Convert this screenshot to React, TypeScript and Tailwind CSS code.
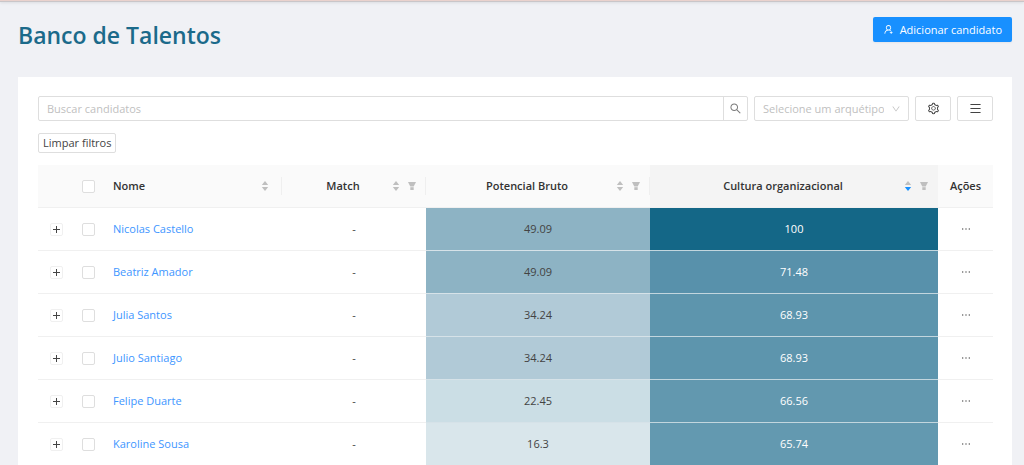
import React, { useState } from 'react';
import {
    AiOutlineDown,
    AiOutlineEllipsis,
    AiOutlineMenu,
    AiOutlineSearch,
    AiOutlineSetting,
    AiOutlineUserAdd,
} from 'react-icons/ai';

interface Score {
    value: string;
    color: string;
}

interface Candidate {
    name: string;
    match: string;
    potential: Score;
    culture: Score;
}

const candidates: Candidate[] = [
    { name: 'Nicolas Castello', match: '-', potential: { value: '49.09', color: 'bg-[#8db3c4]' }, culture: { value: '100', color: 'bg-[#146787]' } },
    { name: 'Beatriz Amador', match: '-', potential: { value: '49.09', color: 'bg-[#8db3c4]' }, culture: { value: '71.48', color: 'bg-[#5891ab]' } },
    { name: 'Julia Santos', match: '-', potential: { value: '34.24', color: 'bg-[#b1cad7]' }, culture: { value: '68.93', color: 'bg-[#5d95ad]' } },
    { name: 'Julio Santiago', match: '-', potential: { value: '34.24', color: 'bg-[#b1cad7]' }, culture: { value: '68.93', color: 'bg-[#5d95ad]' } },
    { name: 'Felipe Duarte', match: '-', potential: { value: '22.45', color: 'bg-[#cbdee5]' }, culture: { value: '66.56', color: 'bg-[#6298af]' } },
    { name: 'Karoline Sousa', match: '-', potential: { value: '16.3', color: 'bg-[#d9e6eb]' }, culture: { value: '65.74', color: 'bg-[#6399b0]' } },
];

const SortButton: React.FC<{ label: string; descending?: boolean }> = ({ label, descending }) => (
    <button type="button" aria-label={`Ordenar por ${label}`} className="shrink-0">
        <svg className="w-2 h-3" viewBox="0 0 8 12">
            <path d="M4 1 7.2 5H.8z" fill="#bfbfbf" />
            <path d="M4 11 7.2 7H.8z" fill={descending ? '#1890ff' : '#bfbfbf'} />
        </svg>
    </button>
);

const FilterButton: React.FC<{ label: string }> = ({ label }) => (
    <button type="button" aria-label={`Filtrar ${label}`} className="shrink-0">
        <svg className="w-2 h-3" viewBox="0 0 8 12" fill="#bfbfbf">
            <path d="M0 2h8L5.7 6.6H2.3z" />
            <path d="M2.3 7.2h3.4V10H2.3z" />
        </svg>
    </button>
);

interface ScoreHeaderProps {
    label: string;
    active?: boolean;
}

const ScoreHeader: React.FC<ScoreHeaderProps> = ({ label, active }) => (
    <th scope="col" className={`border-b border-[#f0f0f0] font-semibold ${active ? 'bg-[#f4f4f4]' : ''}`}>
        <div className={`flex items-center h-[18px] pl-5 pr-[9px] gap-2 border-r ${active ? 'border-transparent' : 'border-[#efefef]'}`}>
            <span className="flex-1 text-center">{label}</span>
            <SortButton label={label} descending={active} />
            <FilterButton label={label} />
        </div>
    </th>
);

const Checkbox: React.FC<{ label: string }> = ({ label }) => (
    <input
        type="checkbox"
        aria-label={label}
        className="block mx-auto w-[13px] h-[13px] appearance-none bg-white border border-[#dedede] rounded-[2px] checked:bg-[#1890ff]"
    />
);

const CandidateRow: React.FC<{ candidate: Candidate }> = ({ candidate }) => {
    const { name, match, potential, culture } = candidate;
    return (
        <tr className="h-[43px]">
            <td className="border-b border-[#f0f0f0]">
                <button
                    type="button"
                    aria-label={`Expandir ${name}`}
                    className="flex items-center justify-center mx-auto w-[13px] h-[13px] border border-[#f0f0f0] rounded-[2px]"
                >
                    <svg className="w-[7px] h-[7px]" viewBox="0 0 7 7" stroke="#444" strokeWidth="1">
                        <path d="M3.5 0v7M0 3.5h7" />
                    </svg>
                </button>
            </td>
            <td className="border-b border-[#f0f0f0]">
                <Checkbox label={`Selecionar ${name}`} />
            </td>
            <td className="border-b border-[#f0f0f0] pl-[11px]">
                <a href="#" className="text-[#4096ff]">{name}</a>
            </td>
            <td className="border-b border-[#f0f0f0] text-center">{match}</td>
            <td className={`border-b border-[#d6e2e8] text-center ${potential.color}`}>{potential.value}</td>
            <td className={`border-b border-[#c2d6de] text-center text-white ${culture.color}`}>{culture.value}</td>
            <td className="border-b border-[#f0f0f0]">
                <button type="button" aria-label={`Ações de ${name}`} className="block mx-auto">
                    <AiOutlineEllipsis className="w-3 h-3" />
                </button>
            </td>
        </tr>
    );
};

const App: React.FC = () => {
    const [search, setSearch] = useState('');

    return (
        <div className="h-screen overflow-hidden bg-[#f0f1f5] font-['Open_Sans',sans-serif] text-[11px] leading-4 text-[#434343]">
            <div className="h-px bg-[#ead2cd] border-b border-[#c9c6c9] box-content shadow-sm" />

            <main className="pl-[18px] pr-3">
                <header className="flex items-start justify-between pt-[15px] h-[75px]">
                    <h1 className="text-[23px] leading-9 font-semibold text-[#1b6a8a]">Banco de Talentos</h1>
                    <button
                        type="button"
                        className="flex items-center justify-center gap-1.5 h-[25px] px-2.5 rounded-[2px] bg-[#1890ff] text-white shadow-xs"
                    >
                        <AiOutlineUserAdd className="w-[11px] h-[11px]" />
                        Adicionar candidato
                    </button>
                </header>

                <section className="bg-white px-[19px] pl-5 py-[19px]">
                    <div className="flex gap-1.5">
                        <div className="flex flex-1 h-[25px] border border-[#dedede] rounded-[2px]">
                            <input
                                type="text"
                                aria-label="Buscar candidatos"
                                placeholder="Buscar candidatos"
                                value={search}
                                onChange={(e) => setSearch(e.target.value)}
                                className="flex-1 px-2 outline-none placeholder:text-[#bfbfbf]"
                            />
                            <button
                                type="button"
                                aria-label="Buscar"
                                className="flex items-center justify-center w-6 border-l border-[#dedede] text-[#7a7a7a]"
                            >
                                <AiOutlineSearch className="w-[13px] h-[13px]" />
                            </button>
                        </div>
                        <div className="relative">
                            <select
                                aria-label="Arquétipo"
                                defaultValue=""
                                className="block w-[155px] h-[25px] pl-2 pr-6 appearance-none bg-white border border-[#dedede] rounded-[2px] text-[#bfbfbf]"
                            >
                                <option value="">Selecione um arquétipo</option>
                            </select>
                            <AiOutlineDown className="absolute right-2 top-2 w-2.5 h-2.5 text-[#bfbfbf] pointer-events-none" />
                        </div>
                        <button
                            type="button"
                            aria-label="Configurações"
                            className="flex items-center justify-center w-9 h-[25px] border border-[#dedede] rounded-[2px]"
                        >
                            <AiOutlineSetting className="w-[13px] h-[13px]" />
                        </button>
                        <button
                            type="button"
                            aria-label="Menu"
                            className="flex items-center justify-center w-9 h-[25px] border border-[#dedede] rounded-[2px]"
                        >
                            <AiOutlineMenu className="w-[13px] h-[13px]" />
                        </button>
                    </div>

                    <button
                        type="button"
                        className="flex items-center mt-3 mb-3 h-5 px-1 border border-[#dedede] rounded-[2px]"
                    >
                        Limpar filtros
                    </button>

                    <table className="w-full table-fixed border-separate border-spacing-0">
                        <colgroup>
                            <col className="w-[37px]" />
                            <col className="w-[27px]" />
                            <col className="w-[180px]" />
                            <col className="w-36" />
                            <col className="w-56" />
                            <col />
                            <col className="w-[55px]" />
                        </colgroup>
                        <thead>
                            <tr className="h-[43px] bg-[#fafafa] text-[#333]">
                                <td className="border-b border-[#f0f0f0]" />
                                <td className="border-b border-[#f0f0f0]">
                                    <Checkbox label="Selecionar todos" />
                                </td>
                                <th scope="col" className="border-b border-[#f0f0f0] font-semibold">
                                    <div className="flex items-center justify-between h-[18px] pl-[11px] pr-3 border-r border-[#efefef]">
                                        Nome
                                        <SortButton label="Nome" />
                                    </div>
                                </th>
                                <ScoreHeader label="Match" />
                                <ScoreHeader label="Potencial Bruto" />
                                <ScoreHeader label="Cultura organizacional" active />
                                <th scope="col" className="border-b border-[#f0f0f0] font-semibold text-center">Ações</th>
                            </tr>
                        </thead>
                        <tbody>
                            {candidates.map((candidate) => (
                                <CandidateRow key={candidate.name} candidate={candidate} />
                            ))}
                        </tbody>
                    </table>
                </section>
            </main>
        </div>
    );
};

export default App;
